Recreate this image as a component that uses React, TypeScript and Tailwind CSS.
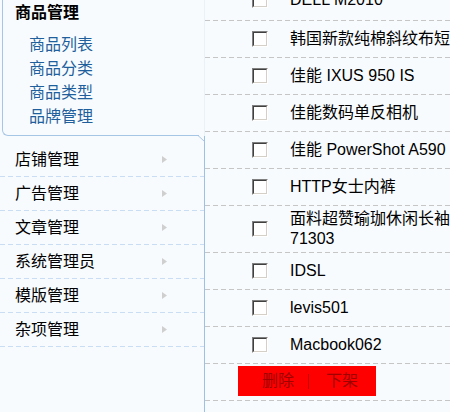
import React from "react";

const products: string[] = [
  "DELL M2010",
  "韩国新款纯棉斜纹布短裤",
  "佳能 IXUS 950 IS",
  "佳能数码单反相机",
  "佳能 PowerShot A590 IS",
  "HTTP女士内裤",
  "面料超赞瑜珈休闲长袖T恤 71303",
  "IDSL",
  "levis501",
  "Macbook062",
];

const subLinks = ["商品列表", "商品分类", "商品类型", "品牌管理"];

const menus = ["店铺管理", "广告管理", "文章管理", "系统管理员", "模版管理", "杂项管理"];

function GrayDash() {
  return <div className="h-px w-full bg-[repeating-linear-gradient(90deg,#c6c6c6_0_5px,transparent_5px_8px)]" />;
}

function BlueDash() {
  return <div className="h-px w-full bg-[repeating-linear-gradient(90deg,#c9def2_0_5px,transparent_5px_8px)]" />;
}

function Checkbox() {
  return (
    <div className="w-4 h-4 shrink-0 border border-t-[#808080] border-l-[#808080] border-r-white border-b-white">
      <div className="w-full h-full bg-white border border-t-[#404040] border-l-[#404040] border-r-[#d4d0c8] border-b-[#d4d0c8]" />
    </div>
  );
}

function Arrow() {
  return (
    <svg width="5" height="7" viewBox="0 0 5 7" className="shrink-0">
      <polygon points="0,0 5,3.5 0,7" fill="#cfcfcf" />
    </svg>
  );
}

export default function App() {
  return (
    <div className="w-[450px] h-[412px] overflow-hidden flex bg-[#f8fbfe] text-[16px] text-black font-['Liberation_Sans','Noto_Sans_CJK_SC',sans-serif]">
      {/* sidebar */}
      <aside className="relative w-[205px] shrink-0 flex flex-col">
        <div className="flex">
          <div className="ml-[2px] w-[197px] border-l border-b border-[#a6c6e6] rounded-bl-[6px] pt-px pl-[12px] pb-[6px]">
            <div className="font-bold leading-6">商品管理</div>
            <ul className="mt-[8px] pl-[14px]">
              {subLinks.map((s) => (
                <li key={s} className="leading-6 text-[#1e5f9c]">
                  {s}
                </li>
              ))}
            </ul>
          </div>
          <div className="flex-1 border-r border-[#e9f1f9]" />
        </div>
        <svg width="8" height="8" viewBox="0 0 8 8" className="absolute left-[198px] top-[134px]">
          <polyline points="0,1.5 6.5,7.5" fill="none" stroke="#a6c6e6" strokeWidth="1" />
        </svg>
        <nav className="flex-1 border-r border-[#9ec0e4] pt-[7px]">
          {menus.map((m) => (
            <div key={m}>
              <div className="flex items-center h-[33px] pl-[15px] pr-[37px]">
                <span className="leading-6">{m}</span>
                <span className="ml-auto">
                  <Arrow />
                </span>
              </div>
              <BlueDash />
            </div>
          ))}
        </nav>
      </aside>

      {/* product list */}
      <main className="w-[330px] shrink-0 flex flex-col -mt-[20px]">
        {products.map((p, i) => (
          <div key={p}>
            <div
              className={
                i === 0
                  ? "flex items-center min-h-[40px] py-[3px] pl-[47px]"
                  : "flex items-center min-h-[36px] py-[3px] pl-[47px]"
              }
            >
              <Checkbox />
              <span className="ml-[22px] w-[200px] leading-5">{p}</span>
            </div>
            <GrayDash />
          </div>
        ))}
        <div className="h-[36px] pt-[2px] pl-[33px]">
          <div className="w-[138px] h-[30px] bg-[#ff0000] flex items-center pl-[24px] text-[#a00000]">
            <span className="leading-5">删除</span>
            <span className="ml-[14px] mr-[17px] w-px h-[15px] bg-[#c40000]" />
            <span className="leading-5">下架</span>
          </div>
        </div>
        <GrayDash />
      </main>
    </div>
  );
}
